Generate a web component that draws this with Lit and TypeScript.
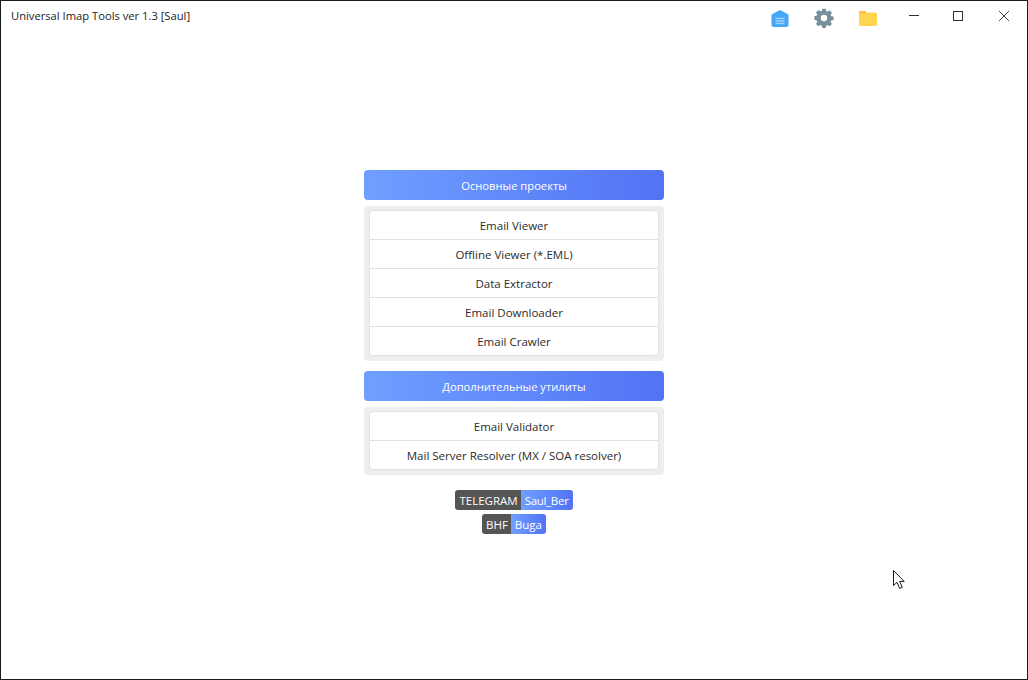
import { LitElement, html, css } from "lit";
import { customElement } from "lit/decorators.js";

@customElement("app-root")
export class AppRoot extends LitElement {
  static styles = css`
    :host {
      display: block;
      width: 1028px;
      height: 680px;
      box-sizing: border-box;
      border: 1px solid #1c1c1c;
      background: #fff;
      position: relative;
      overflow: hidden;
      font-family: "Open Sans", "Noto Sans", "Liberation Sans", sans-serif;
      font-size: 11.5px;
      color: #2b2b2b;
    }
    .titlebar { display: flex; align-items: flex-start; height: 34px; }
    .title { padding: 6px 0 0 10px; line-height: 17px; font-size: 11.2px; color: #222; flex: 1; }
    .tool { display: flex; width: 44px; height: 34px; justify-content: center; padding-top: 7px; box-sizing: border-box; }
    .tools { display: flex; margin-right: -1px; }
    .win { display: flex; }
    .win .btn { width: 46px; height: 30px; box-sizing: border-box; display: flex; align-items: center; justify-content: center; }
    .win .btn.min { padding-left: 4px; }
    .main { display: flex; flex-direction: column; align-items: center; padding-top: 135px; }
    .col { width: 300px; display: flex; flex-direction: column; }
    .head {
      height: 30px;
      border-radius: 4px;
      background: linear-gradient(90deg, #6f9fff, #5273f5);
      color: #fff;
      font-size: 11.2px;
      display: flex;
      align-items: center;
      justify-content: center;
      margin-bottom: 6px;
    }
    .panel {
      background: #eeeeee;
      border-radius: 4px;
      padding: 4px 5px 5px;
      margin-bottom: 10px;
    }
    .list {
      background: #fff;
      border: 1px solid #e2e2e2;
      border-radius: 4px;
      overflow: hidden;
    }
    .row {
      height: 28px;
      display: flex;
      align-items: center;
      justify-content: center;
      border-top: 1px solid #e2e2e2;
    }
    .row:first-child { border-top: 0; }
    .badges { display: flex; flex-direction: column; align-items: center; gap: 4px; margin-top: 5px; }
    .badge { display: flex; height: 20px; border-radius: 3px; overflow: hidden; color: #fff; line-height: 21px; }
    .badge .l { background: #555; padding: 0 3px 0 4px; }
    .badge .r { background: linear-gradient(90deg, #6f9fff, #5273f5); padding: 0 4px 0 4px; }
    .badge .r.tight { letter-spacing: -0.3px; }
    .cursor { position: absolute; left: 891px; top: 568px; }
  `;

  private rows(items: string[]) {
    return html`<div class="panel"><div class="list">${items.map((t) => html`<div class="row">${t}</div>`)}</div></div>`;
  }

  render() {
    return html`
      <div class="titlebar">
        <div class="title">Universal Imap Tools ver 1.3 [Saul]</div>
        <div class="tools">
          <div class="tool">
            <svg width="22" height="22" viewBox="0 0 22 22">
              <path d="M2.5 6.4 11 2l8.5 4.4V17a2 2 0 0 1-2 2h-13a2 2 0 0 1-2-2z" fill="#45a7f7"/>
              <path d="M6.5 10.5h9M6.5 13h9M6.5 15.5h9" stroke="#9fd0fb" stroke-width="1.4"/>
            </svg>
          </div>
          <div class="tool">
            <svg width="22" height="22" viewBox="0 0 22 22">
              <path fill="#78909c" fill-rule="evenodd" transform="translate(1.3 0.3) scale(0.88)" d="M9 .5h4l.5 2.6 1.6.7 2.2-1.5 2.8 2.8-1.5 2.2.7 1.6 2.6.5v4l-2.6.5-.7 1.6 1.5 2.2-2.8 2.8-2.2-1.5-1.6.7-.5 2.6H9l-.5-2.6-1.6-.7-2.2 1.5-2.8-2.8 1.5-2.2-.7-1.6L.1 13V9l2.6-.5.7-1.6-1.5-2.2 2.8-2.8 2.2 1.5 1.6-.7zM11 7.4a3.6 3.6 0 1 0 0 7.2 3.6 3.6 0 0 0 0-7.2z"/>
            </svg>
          </div>
          <div class="tool">
            <svg width="22" height="22" viewBox="0 0 22 22">
              <rect x="2" y="4.5" width="18" height="13.5" rx="1.6" fill="#ffd54f"/>
              <path d="M2 6V4.4A1.4 1.4 0 0 1 3.4 3H8l2 2.2H2z" fill="#fbbf3a"/>
            </svg>
          </div>
        </div>
        <div class="win">
          <div class="btn min"><svg width="10" height="10"><path d="M0 4.5h10" stroke="#333"/></svg></div>
          <div class="btn"><svg width="10" height="10"><rect x=".5" y=".5" width="9" height="9" fill="none" stroke="#333"/></svg></div>
          <div class="btn"><svg width="12" height="12"><path d="M1 1l10 10M11 1 1 11" stroke="#444" fill="none"/></svg></div>
        </div>
      </div>
      <div class="main">
        <div class="col">
          <div class="head">Основные проекты</div>
          ${this.rows(["Email Viewer", "Offline Viewer (*.EML)", "Data Extractor", "Email Downloader", "Email Crawler"])}
          <div class="head">Дополнительные утилиты</div>
          ${this.rows(["Email Validator", "Mail Server Resolver (MX / SOA resolver)"])}
          <div class="badges">
            <div class="badge"><span class="l">TELEGRAM</span><span class="r tight">Saul_Ber</span></div>
            <div class="badge"><span class="l">BHF</span><span class="r">Buga</span></div>
          </div>
        </div>
      </div>
      <svg class="cursor" width="14" height="22" viewBox="0 0 14 22">
        <path d="M1.5 1.5v15l3.5-3.2 2.7 6.2 2.6-1.2-2.7-5.9h4.6z" fill="#fff" stroke="#1a1a1a" stroke-width="1"/>
      </svg>
    `;
  }
}
